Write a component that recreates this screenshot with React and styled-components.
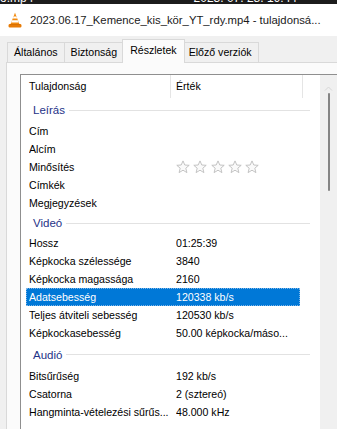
import React from "react"
import styled, { createGlobalStyle } from "styled-components"

const GlobalStyle = createGlobalStyle`
  html, body {
    margin: 0;
    padding: 0;
  }
  body {
    width: 337px;
    height: 429px;
    overflow: hidden;
    background: #f0f0f0;
    font-family: "Liberation Sans", Arial, sans-serif;
    color: #000000;
  }
`

const groups = [
  {
    title: "Leírás",
    height: 24,
    rows: [
      { name: "Cím", value: "" },
      { name: "Alcím", value: "" },
      { name: "Minősítés", stars: true },
      { name: "Címkék", value: "" },
      { name: "Megjegyzések", value: "" },
    ],
  },
  {
    title: "Videó",
    height: 22,
    rows: [
      { name: "Hossz", value: "01:25:39" },
      { name: "Képkocka szélessége", value: "3840" },
      { name: "Képkocka magassága", value: "2160" },
      { name: "Adatsebesség", value: "120338 kb/s", selected: true },
      { name: "Teljes átviteli sebesség", value: "120530 kb/s" },
      { name: "Képkockasebesség", value: "50.00 képkocka/máso..." },
    ],
  },
  {
    title: "Audió",
    height: 25,
    rows: [
      { name: "Bitsűrűség", value: "192 kb/s" },
      { name: "Csatorna", value: "2 (sztereó)" },
      { name: "Hangminta-vételezési sűrűs...", value: "48.000 kHz" },
    ],
  },
]

function VlcIcon() {
  return (
    <svg width="14" height="16" viewBox="0 0 14 16">
      <polygon points="7,0.8 11.6,12.5 2.4,12.5" fill="#f28a0f" />
      <polygon points="5.6,4.4 8.4,4.4 9.2,6.6 4.8,6.6" fill="#ffffff" />
      <polygon points="4.1,8.3 9.9,8.3 10.8,10.6 3.2,10.6" fill="#ffffff" />
      <rect x="0.6" y="12" width="12.8" height="3.4" rx="1.2" fill="#e77b06" />
      <rect x="2" y="12" width="10" height="1" fill="#c86500" opacity="0.5" />
    </svg>
  )
}

function Star() {
  return (
    <svg width="14" height="14" viewBox="0 0 14 14">
      <polygon
        points="7,0.9 8.8,5 13.2,5.3 9.8,8.2 10.9,12.6 7,10.2 3.1,12.6 4.2,8.2 0.8,5.3 5.2,5"
        fill="#fafafa"
        stroke="#bdbdbd"
        strokeWidth="0.9"
        strokeLinejoin="round"
      />
    </svg>
  )
}

export default function App() {
  return (
    <Window>
      <GlobalStyle />
      <TopStrip>
        <span>o.mp4</span>
        <span>2023. 07. 28. 19:44</span>
      </TopStrip>
      <TitleBar>
        <VlcIcon />
        <TitleText>2023.06.17_Kemence_kis_kör_YT_rdy.mp4 - tulajdonsá...</TitleText>
      </TitleBar>
      <TabStrip>
        <Tab>Általános</Tab>
        <Tab>Biztonság</Tab>
        <Tab $active>Részletek</Tab>
        <Tab>Előző verziók</Tab>
      </TabStrip>
      <Panel>
        <ListView>
          <ListMain>
            <Header>
              <HeaderCell $width={150} $pad={8}>Tulajdonság</HeaderCell>
              <HeaderCell $width={132} $pad={5}>Érték</HeaderCell>
            </Header>
            {groups.map((g) => (
              <React.Fragment key={g.title}>
                <Group $height={g.height}>
                  <span>{g.title}</span>
                  <GroupLine />
                </Group>
                {g.rows.map((r) => (
                  <Row key={r.name} $selected={r.selected}>
                    <Cell>{r.name}</Cell>
                    {r.stars ? (
                      <Stars>
                        <Star />
                        <Star />
                        <Star />
                        <Star />
                        <Star />
                      </Stars>
                    ) : (
                      <Cell>{r.value}</Cell>
                    )}
                  </Row>
                ))}
              </React.Fragment>
            ))}
          </ListMain>
          <ScrollBar>
            <svg width="9" height="5" viewBox="0 0 9 5">
              <polyline points="1,4.5 4.5,1 8,4.5" fill="none" stroke="#d6d6d6" strokeWidth="1" />
            </svg>
            <Thumb />
          </ScrollBar>
        </ListView>
      </Panel>
    </Window>
  )
}

let Window = styled.div`
  width: 337px;
  height: 429px;
  display: flex;
  flex-direction: column;
  overflow: hidden;
`

let TopStrip = styled.div`
  height: 4px;
  flex: none;
  background: #1c1c1c;
  color: #ffffff;
  display: flex;
  align-items: flex-end;
  justify-content: space-between;
  padding-right: 40px;
  overflow: hidden;
  font-size: 12px;
  line-height: 12px;
  white-space: nowrap;
`

let TitleBar = styled.div`
  height: 32px;
  flex: none;
  background: #ffffff;
  display: flex;
  align-items: center;
  gap: 8px;
  padding-left: 8px;
`

let TitleText = styled.div`
  font-size: 11.3px;
  color: #1a1a1a;
  white-space: nowrap;
`

let TabStrip = styled.div`
  height: 26px;
  flex: none;
  display: flex;
  align-items: flex-end;
  padding-left: 7px;
  background: #f0f0f0;
`

let Tab = styled.div`
  box-sizing: border-box;
  height: ${(p) => (p.$active ? "24px" : "20px")};
  line-height: ${(p) => (p.$active ? "21px" : "19px")};
  padding: 0 ${(p) => (p.$active ? "7px" : "6px")};
  margin: 0 ${(p) => (p.$active ? "-2px" : "0")} ${(p) => (p.$active ? "-1px" : "0")};
  margin-left: ${(p) => (p.$active ? "-2px" : "-1px")};
  position: relative;
  z-index: ${(p) => (p.$active ? 1 : 0)};
  border: 1px solid #d9d9d9;
  border-bottom: none;
  background: ${(p) => (p.$active ? "#fbfbfb" : "#f0f0f0")};
  font-size: 10.6px;
  color: #000000;
  white-space: nowrap;

  &:first-child {
    margin-left: 0;
  }
`

let Panel = styled.div`
  flex: 1;
  display: flex;
  min-height: 0;
  margin-left: 6px;
  padding: 11px 0 0 13px;
  background: #fbfbfb;
  border-top: 1px solid #d9d9d9;
  border-left: 1px solid #d9d9d9;
`

let ListView = styled.div`
  flex: 1;
  display: flex;
  background: #ffffff;
  border-top: 1px solid #8f8f8f;
  border-left: 1px solid #8f8f8f;
  overflow: hidden;
`

let ListMain = styled.div`
  width: 299px;
  flex: none;
  display: flex;
  flex-direction: column;
  font-size: 10.6px;
`

let Header = styled.div`
  height: 23px;
  flex: none;
  display: flex;
`

let HeaderCell = styled.div`
  box-sizing: border-box;
  width: ${(p) => p.$width}px;
  padding-left: ${(p) => p.$pad}px;
  border-right: 1px solid #e5e5e5;
  line-height: 23px;
  color: #000000;
`

let Group = styled.div`
  height: ${(p) => p.$height}px;
  flex: none;
  display: flex;
  align-items: center;
  gap: 4px;
  padding: 0 10px 0 12px;
  color: #1e3287;
  font-size: 11.5px;
`

let GroupLine = styled.div`
  flex: 1;
  height: 1px;
  background: #e2e2e2;
`

let Row = styled.div`
  box-sizing: border-box;
  height: 18px;
  flex: none;
  width: 274px;
  margin-left: 5px;
  padding-left: 3px;
  display: grid;
  grid-template-columns: 147px 1fr;
  align-items: center;
  line-height: 18px;
  white-space: nowrap;
  overflow: hidden;
  background: ${(p) => (p.$selected ? "#0078d7" : "transparent")};
  color: ${(p) => (p.$selected ? "#ffffff" : "#000000")};
  outline: ${(p) => (p.$selected ? "1px dotted #7fb6e8" : "none")};
  outline-offset: -1px;
`

let Cell = styled.div`
  overflow: hidden;
`

let Stars = styled.div`
  display: flex;
  gap: 3.3px;
  align-items: center;
`

let ScrollBar = styled.div`
  width: 17px;
  flex: none;
  background: #f0f0f0;
  display: flex;
  flex-direction: column;
  align-items: center;
  padding-top: 11px;
  gap: 2px;
`

let Thumb = styled.div`
  width: 2px;
  height: 98px;
  border-radius: 1px;
  background: #858585;
`
